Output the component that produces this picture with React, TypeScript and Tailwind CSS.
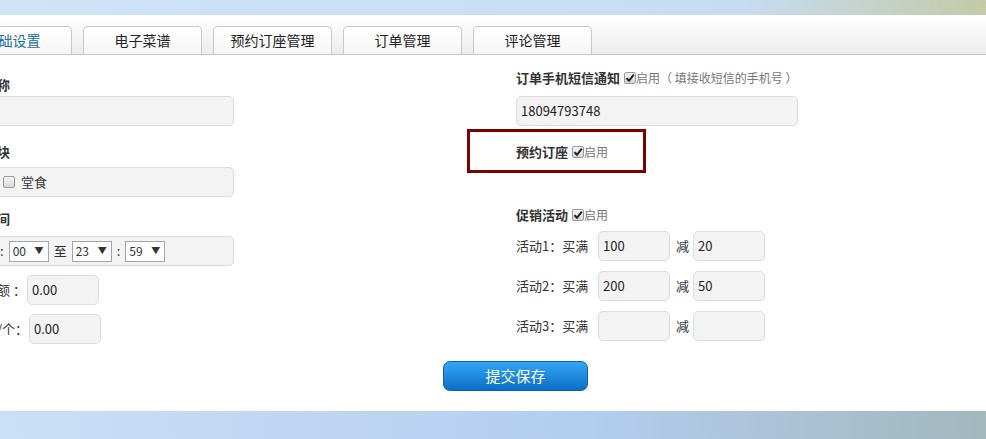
import React from "react"

const font = { fontFamily: '"Noto Sans CJK SC", "Liberation Sans", sans-serif' }

function Check({ checked }: { checked?: boolean }) {
  return (
    <span className="inline-flex h-[12px] w-[12px] shrink-0 items-center justify-center rounded-[2px] border border-[#9a9a9a] bg-linear-to-b from-[#f4f4f4] to-[#d8d8d8]">
      {checked && (
        <svg width="10" height="10" viewBox="0 0 10 10">
          <path d="M1.5 5.2 L4 7.8 L8.8 1.6" fill="none" stroke="#222" strokeWidth="2" />
        </svg>
      )}
    </span>
  )
}

function Sel({ v }: { v: string }) {
  return (
    <span className="flex h-[21px] w-[40px] shrink-0 items-center justify-between border border-[#a6a6a6] bg-white pl-[3px] pr-[4px] text-[12px] text-[#333]">
      <span>{v}</span>
      <span className="text-[9px]">▼</span>
    </span>
  )
}

function Field({ v, w }: { v?: string; w: string }) {
  return (
    <div className={`flex h-[30px] shrink-0 items-center rounded-[5px] border border-[#dcdcdc] bg-[#f3f3f3] px-[4px] text-[13px] text-[#222] ${w}`}>
      {v}
    </div>
  )
}

const tabs = ["基础设置", "电子菜谱", "预约订座管理", "订单管理", "评论管理"]

export default function App() {
  return (
    <div className="h-[439px] w-[986px] overflow-hidden bg-white text-[#333]" style={font}>
      <div className="h-[15px] bg-linear-to-r from-[#d0e3f7] via-[#c7dcf3] via-75% to-[#c4caa6]" />
      <div className="flex h-[40px] border-b border-[#c6c6c6] bg-linear-to-b from-white to-[#ececec]">
        <div className="-ml-[47px] flex gap-[11px]">
          {tabs.map((t, i) => (
            <div
              key={t}
              className={`mt-[11px] flex h-[28px] w-[119px] shrink-0 items-center justify-center rounded-t-[5px] border border-b-0 border-[#c8c8c8] bg-linear-to-b from-white to-[#f6f6f6] text-[14px] whitespace-nowrap ${
                i === 0 ? "text-[#1c6ea6]" : "text-[#222]"
              }`}
            >
              {t}
            </div>
          ))}
        </div>
      </div>

      <div className="flex">
        <div className="-ml-[42px] flex w-[276px] shrink-0 flex-col pt-[20px] whitespace-nowrap">
          <div className="h-[20px] text-[13px] leading-[20px] font-bold">店铺名称</div>
          <div className="mt-[1px]">
            <Field w="w-[276px]" />
          </div>
          <div className="mt-[16px] h-[20px] text-[13px] leading-[20px] font-bold">经营板块</div>
          <div className="mt-[5px] flex h-[30px] w-[276px] items-center rounded-[5px] border border-[#dcdcdc] bg-[#f3f3f3] pl-[44px] text-[13px]">
            <Check />
            <span className="ml-[6px]">堂食</span>
          </div>
          <div className="mt-[12px] h-[20px] text-[13px] leading-[20px] font-bold">营业时间</div>
          <div className="mt-[7px] flex h-[30px] w-[276px] items-center gap-[5px] rounded-[5px] border border-[#dcdcdc] bg-[#f3f3f3] text-[13px]">
            <span className="-ml-[4px]">
              <Sel v="08" />
            </span>
            <span>:</span>
            <Sel v="00" />
            <span>至</span>
            <Sel v="23" />
            <span>:</span>
            <Sel v="59" />
          </div>
          <div className="mt-[9px] flex items-center text-[13px]">
            <span className="w-[66px] shrink-0 text-right">起送金额 ：</span>
            <span className="ml-[3px]">
              <Field v="0.00" w="w-[72px]" />
            </span>
          </div>
          <div className="mt-[9px] flex items-center text-[13px]">
            <span className="w-[68px] shrink-0 text-right">餐盒费/个：</span>
            <span className="ml-[3px]">
              <Field v="0.00" w="w-[72px]" />
            </span>
          </div>
        </div>

        <div className="ml-[282px] flex w-[290px] shrink-0 flex-col pt-[13px] whitespace-nowrap">
          <div className="flex h-[20px] items-center text-[13px]">
            <span className="font-bold">订单手机短信通知</span>
            <span className="ml-[4px] flex items-center">
              <Check checked />
            </span>
            <span className="text-[12px] text-[#777]">启用（ 填接收短信的手机号 ）</span>
          </div>
          <div className="mt-[8px]">
            <Field v="18094793748" w="w-[282px]" />
          </div>
          <div className="relative mt-[16px] flex h-[20px] items-center text-[13px]">
            <div className="absolute -top-[13px] -left-[49px] h-[44px] w-[179px] border-[3px] border-[#7b0000]" />
            <span className="font-bold">预约订座</span>
            <span className="ml-[4px] flex items-center">
              <Check checked />
            </span>
            <span className="text-[12px] text-[#777]">启用</span>
          </div>
          <div className="mt-[43px] flex h-[20px] items-center text-[13px]">
            <span className="font-bold">促销活动</span>
            <span className="ml-[4px] flex items-center">
              <Check checked />
            </span>
            <span className="text-[12px] text-[#777]">启用</span>
          </div>
          {[
            ["1", "100", "20", "mt-[6px]"],
            ["2", "200", "50", "mt-[10px]"],
            ["3", "", "", "mt-[10px]"],
          ].map(([n, a, b, m]) => (
            <div key={n} className={`flex items-center text-[13px] ${m}`}>
              <span className="w-[82px] shrink-0">活动{n}：买满</span>
              <Field v={a} w="w-[72px]" />
              <span className="ml-[6px] w-[17px] shrink-0">减</span>
              <Field v={b} w="w-[72px]" />
            </div>
          ))}
        </div>
      </div>

      <div className="mt-[17px] pl-[443px]">
        <button className="h-[30px] w-[145px] rounded-[7px] border border-[#0d62a8] bg-linear-to-b from-[#33a6f5] to-[#0a6fc6] text-[15px] text-white">
          提交保存
        </button>
      </div>

      <div className="mt-[20px] h-[28px] bg-linear-to-r from-[#cae0f6] via-[#b3cdef] via-60% to-[#a1b8bd]" />
    </div>
  )
}
